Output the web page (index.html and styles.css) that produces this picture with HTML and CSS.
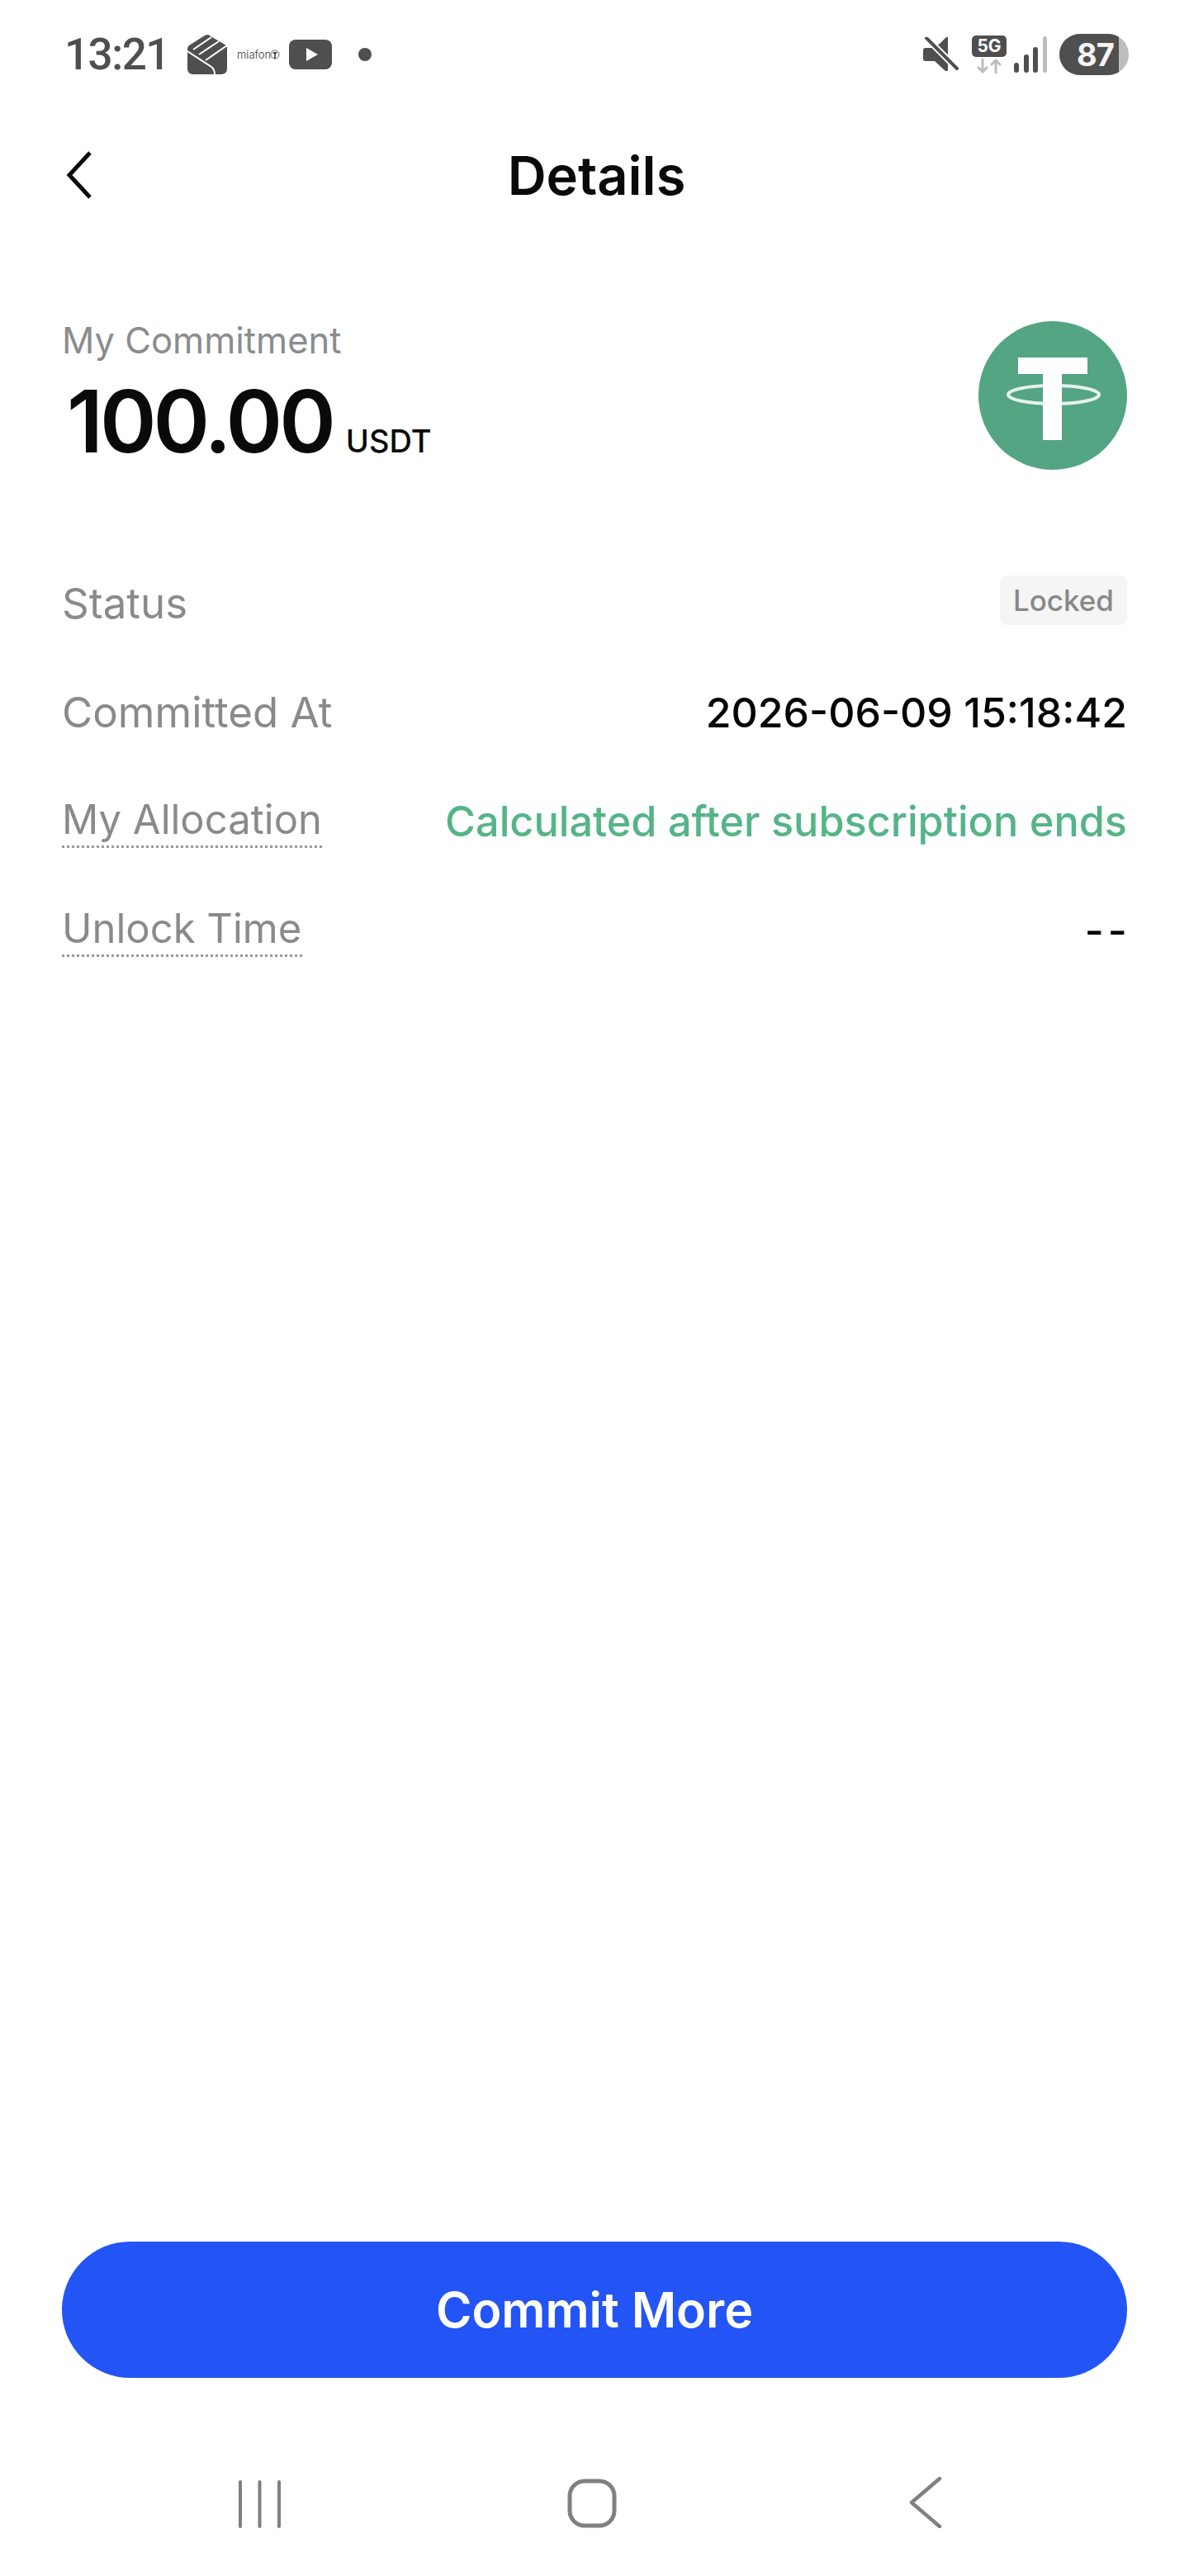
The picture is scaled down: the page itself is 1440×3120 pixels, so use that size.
FILE: index.html
```html
<!DOCTYPE html>
<html lang="en">
<head>
  <meta charset="UTF-8">
  <title>Details</title>
  <link rel="stylesheet" href="styles.css">
</head>
<body>
  <div class="page">

    <!-- Status bar -->
    <div class="statusbar">
      <div class="status-left">
        <span class="time">13:21</span>
        <svg class="ic-fold" width="48" height="48" viewBox="0 0 48 48">
          <path d="M25 0 L47 13 Q48 14 48 16 V41 Q48 48 41 48 H7 Q0 48 0 41 V17 Q0 15 2 13 L21 1 Q23 0 25 0 Z" fill="#4f4f4f"/>
          <path d="M0 20 L29 39 Q33 42 33 48 M7 18 L29 3 M14 24 L38 8 M22 31 L48 13" fill="none" stroke="#fff" stroke-width="2"/>
        </svg>
        <span class="miafon">miafon</span>
        <svg class="ic-mia" width="12" height="12" viewBox="0 0 12 12">
          <circle cx="6" cy="6" r="5" fill="none" stroke="#444" stroke-width="0.8"/>
          <path d="M3.5 4 H8.5 M6 4 V11" stroke="#222" stroke-width="1.4"/>
        </svg>
        <svg class="ic-yt" width="52" height="36" viewBox="0 0 52 36">
          <rect width="52" height="36" rx="8" fill="#4f4f4f"/>
          <path d="M21 10 L35 18 L21 26 Z" fill="#fff"/>
        </svg>
        <span class="dot"></span>
      </div>
      <div class="status-right">
        <svg class="ic-mute" width="43" height="42" viewBox="0 0 43 42">
          <path d="M28 0 H30 V41 H27 L14 29 H3 Q0 29 0 26 V16 Q0 13 3 13 H12 L20 8 Z" fill="#4f4f4f"/>
          <path d="M4 1 L41 38" stroke="#fff" stroke-width="8"/>
          <path d="M4 1 L41 38" stroke="#4f4f4f" stroke-width="4" stroke-linecap="round"/>
        </svg>
        <div class="net">
          <span class="net-5g">5G</span>
          <svg width="30" height="18" viewBox="0 0 30 18">
            <path d="M7 0 V16 M1 10 L7 16 L13 10 M23 18 V2 M17 8 L23 2 L29 8" fill="none" stroke="#bdbdbd" stroke-width="3"/>
          </svg>
        </div>
        <svg class="ic-signal" width="40" height="44" viewBox="0 0 40 44">
          <rect x="0" y="32" width="6" height="12" rx="3" fill="#4f4f4f"/>
          <rect x="12" y="22" width="6" height="22" rx="3" fill="#4f4f4f"/>
          <rect x="23" y="13" width="6" height="31" rx="3" fill="#4f4f4f"/>
          <rect x="35" y="0" width="5" height="44" rx="2.5" fill="#bdbdbd"/>
        </svg>
        <div class="battery"><span class="battery-level">87</span></div>
      </div>
    </div>

    <!-- Titulo -->
    <div class="navbar">
      <svg class="back" width="32" height="60" viewBox="0 0 32 60">
        <path d="M29 3 L4 30 L29 57" fill="none" stroke="#0a0a0a" stroke-width="5"/>
      </svg>
      <h1 class="title">Details</h1>
      <span></span>
    </div>

    <!-- Resumen -->
    <div class="summary">
      <div>
        <div class="summary-label">My Commitment</div>
        <div class="amount"><span class="amount-num">100.00</span><span class="amount-unit">USDT</span></div>
      </div>
      <svg class="coin" width="180" height="180" viewBox="0 0 180 180">
        <circle cx="90" cy="90" r="90" fill="#53a584"/>
        <ellipse cx="91" cy="89" rx="55" ry="11" fill="none" stroke="#fff" stroke-width="4" opacity="0.85"/>
        <path d="M48 44 H132 V64 H101 V144 H78 V64 H48 Z" fill="#fff"/>
      </svg>
    </div>

    <!-- Filas -->
    <div class="rows">
      <div class="row">
        <span class="row-label">Status</span>
        <span class="badge">Locked</span>
      </div>
      <div class="row">
        <span class="row-label">Committed At</span>
        <span class="row-value">2026-06-09 15:18:42</span>
      </div>
      <div class="row">
        <span class="row-label hint">My Allocation</span>
        <span class="row-value green">Calculated after subscription ends</span>
      </div>
      <div class="row">
        <span class="row-label hint">Unlock Time</span>
        <span class="row-value dashes">--</span>
      </div>
    </div>

    <div class="spacer"></div>

    <button class="btn-commit" type="button">Commit More</button>

    <!-- Barra de navegacion -->
    <div class="sysnav">
      <svg width="51" height="58" viewBox="0 0 51 58">
        <path d="M2 2 V56 M25.500 2 V56 M49 2 V56" stroke="#808080" stroke-width="4" stroke-linecap="round"/>
      </svg>
      <svg class="nav-home" width="60" height="60" viewBox="0 0 60 60">
        <rect x="3" y="3" width="54" height="54" rx="18" fill="none" stroke="#808080" stroke-width="5"/>
      </svg>
      <svg class="nav-back" width="40" height="62" viewBox="0 0 40 62">
        <path d="M37 2 L3 31 L37 60" fill="none" stroke="#808080" stroke-width="4.500" stroke-linecap="round" stroke-linejoin="round"/>
      </svg>
    </div>

  </div>
</body>
</html>
```

FILE: styles.css
```css
* {
  box-sizing: border-box;
}

body {
  margin: 0;
  background: #fff;
  font-family: Inter, "Liberation Sans", sans-serif;
}

.page {
  width: 1440px;
  height: 3120px;
  display: flex;
  flex-direction: column;
}

/* Status bar */
.statusbar {
  height: 132px;
  padding: 41px 73px 0 78px;
  display: flex;
  justify-content: space-between;
  align-items: flex-start;
  color: #4f4f4f;
}

.status-left,
.status-right {
  display: flex;
  align-items: center;
  height: 50px;
}

.time {
  font-family: Roboto, sans-serif;
  font-size: 53px;
  font-weight: 500;
  line-height: 50px;
  letter-spacing: -1.5px;
  width: 149px;
}

.miafon {
  margin-left: 12px;
  font-size: 13px;
  font-weight: 300;
  color: #333;
  width: 40px;
}

.ic-mia {
  margin-right: 11px;
}

.dot {
  width: 16px;
  height: 16px;
  margin-left: 32px;
  border-radius: 50%;
  background: #4f4f4f;
}

.net {
  margin-left: 16px;
  display: flex;
  flex-direction: column;
  align-items: center;
  gap: 2px;
}

.net-5g {
  width: 42px;
  height: 26px;
  border-radius: 5px;
  background: #4f4f4f;
  color: #fff;
  font-size: 21px;
  font-weight: 700;
  line-height: 26px;
  text-align: center;
}

.ic-signal {
  margin-left: 9px;
}

.battery {
  width: 84px;
  height: 50px;
  margin-left: 15px;
  border-radius: 25px;
  overflow: hidden;
  background: #bdbdbd;
}

.battery-level {
  display: block;
  width: 72px;
  height: 50px;
  padding-left: 21px;
  background: #4f4f4f;
  color: #f4f4f4;
  font-size: 38px;
  font-weight: 700;
  line-height: 50px;
  letter-spacing: -1px;
}

/* Titulo */
.navbar {
  height: 160px;
  padding: 0 75px 0 80px;
  display: grid;
  grid-template-columns: 1fr auto 1fr;
  align-items: center;
}

.title {
  margin: 0;
  font-size: 65px;
  font-weight: 600;
  color: #0a0a0a;
}

/* Resumen */
.summary {
  margin-top: 95px;
  padding: 0 75px;
  display: flex;
  justify-content: space-between;
  align-items: flex-start;
}

.summary-label {
  font-size: 43.500px;
  line-height: 48px;
  color: #8a8c8e;
  margin-top: 1px;
}

.amount {
  display: flex;
  align-items: baseline;
  margin-top: 24px;
  padding-left: 6px;
}

.amount-num {
  font-size: 104px;
  font-weight: 600;
  line-height: 100px;
  letter-spacing: -4px;
  color: #0a0a0a;
}

.amount-unit {
  margin-left: 16px;
  font-size: 38px;
  font-weight: 500;
  color: #0a0a0a;
}

.coin {
  margin-top: 2px;
}

/* Filas */
.rows {
  margin-top: 96px;
  padding: 0 75px;
}

.row {
  height: 132px;
  display: flex;
  justify-content: space-between;
  align-items: center;
}

.row-label {
  font-size: 51px;
  line-height: 60px;
  color: #888a8c;
}

.row-value {
  font-size: 50px;
  line-height: 60px;
  font-weight: 500;
  color: #050505;
}

.green {
  font-size: 50.400px;
  color: #55b488;
}

.dashes {
  letter-spacing: 5px;
  margin-right: -5px;
}

.hint {
  font-size: 49px;
  padding: 0 2px 4px 0;
  background: repeating-linear-gradient(90deg, #999 0 3px, transparent 3px 6px) left bottom / 100% 3px no-repeat;
}

.badge {
  height: 60px;
  margin-bottom: 8px;
  padding: 0 16px;
  border-radius: 8px;
  background: #f5f5f5;
  color: #888;
  font-size: 35px;
  font-weight: 500;
  line-height: 60px;
}

.spacer {
  flex: 1;
}

.btn-commit {
  height: 165px;
  margin: 0 75px;
  border: 0;
  border-radius: 83px;
  background: #2354f5;
  color: #fff;
  font-family: inherit;
  font-size: 59px;
  font-weight: 600;
}

/* Barra de navegacion */
.sysnav {
  height: 240px;
  padding: 0 0 58px 289px;
  display: flex;
  align-items: flex-end;
}

.nav-home {
  margin-left: 347px;
}

.nav-back {
  margin-left: 354px;
}
```
